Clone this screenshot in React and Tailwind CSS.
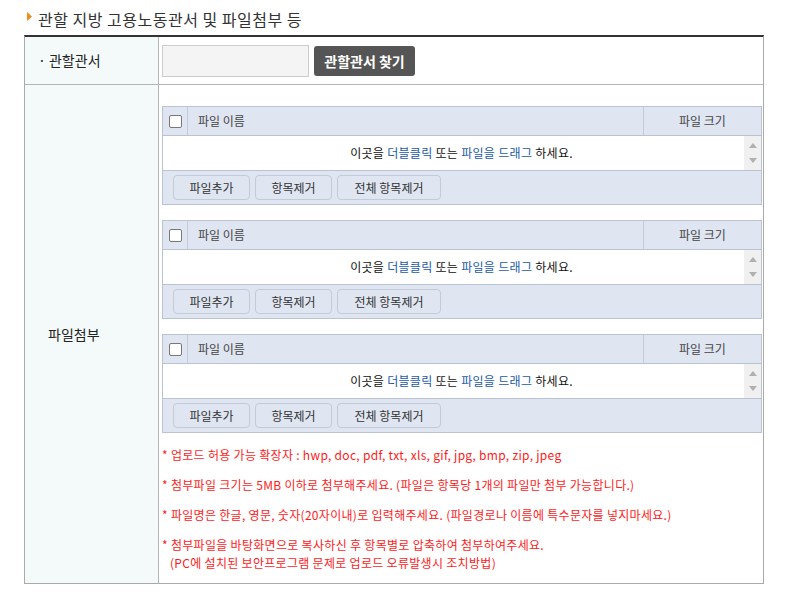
import React from "react";

const font = { fontFamily: '"Noto Sans CJK KR", "Noto Sans", sans-serif' };

function FileBox() {
  return (
    <div className="border border-[#b9c3d3] bg-[#dfe6f1]">
      <div className="flex h-[28px] items-stretch text-[12px] text-[#444]">
        <div className="flex w-[25px] items-center justify-center border-r border-[#c3cbd8]">
          <span className="block h-[13px] w-[13px] rounded-[2px] border border-[#777] bg-white" />
        </div>
        <div className="flex flex-1 items-center pl-[10px]">파일 이름</div>
        <div className="flex w-[118px] items-center justify-center border-l border-[#c3cbd8]">파일 크기</div>
      </div>
      <div className="flex h-[36px] border-y border-[#b9c3d3] bg-white">
        <div className="flex flex-1 items-center justify-center pl-[16px] text-[12px] tracking-[0.3px] text-[#111]">
          <span>
            이곳을 <span className="text-[#1a5aa8]">더블클릭</span> 또는{" "}
            <span className="text-[#1a5aa8]">파일을 드래그</span> 하세요.
          </span>
        </div>
        <div className="flex w-[17px] flex-col items-center justify-between bg-[#f0f0f0] py-[7px]">
          <svg width="8" height="5" viewBox="0 0 8 5"><path d="M0 5L4 0L8 5Z" fill="#b0b0b0" /></svg>
          <svg width="8" height="5" viewBox="0 0 8 5"><path d="M0 0L4 5L8 0Z" fill="#b0b0b0" /></svg>
        </div>
      </div>
      <div className="flex h-[33px] items-center gap-[5px] pl-[10px]">
        <button className="h-[25px] w-[77px] rounded-[4px] border border-[#c3cbd8] bg-[#dfe6f1] text-[12px] text-[#333]">파일추가</button>
        <button className="h-[25px] w-[77px] rounded-[4px] border border-[#c3cbd8] bg-[#dfe6f1] text-[12px] text-[#333]">항목제거</button>
        <button className="h-[25px] w-[104px] rounded-[4px] border border-[#c3cbd8] bg-[#dfe6f1] text-[12px] text-[#333]">전체 항목제거</button>
      </div>
    </div>
  );
}

export default function App() {
  return (
    <div className="min-h-[592px] w-[785px] bg-white pl-[24px] pt-[7px]" style={font}>
      <div className="flex h-[24px] items-center pl-[3px] text-[16px] tracking-[0.5px] text-[#333]">
        <svg width="5" height="9" viewBox="0 0 5 9" className="mb-[5px] mr-[6px]">
          <path d="M0 0L5 4.5L0 9Z" fill="#f08c1e" />
        </svg>
        관할 지방 고용노동관서 및 파일첨부 등
      </div>
      <div className="mt-[4px] w-[740px] border-x border-b border-t-2 border-[#aaa] border-t-[#333]">
        <div className="grid h-[48px] grid-cols-[134px_1fr] border-b border-[#b5b5b5]">
          <div className="flex items-center border-r border-[#b5b5b5] bg-[#f4fafa] pl-[13px] text-[14px] text-[#222]">
            · 관할관서
          </div>
          <div className="flex items-center gap-[5px] pl-[3px] pt-[1px]">
            <div className="h-[32px] w-[147px] border border-[#ccc] bg-[#f4f4f4]" />
            <button className="h-[30px] w-[101px] rounded-[3px] bg-[#555] text-[14px] font-bold text-white">관할관서 찾기</button>
          </div>
        </div>
        <div className="grid grid-cols-[134px_1fr]">
          <div className="flex items-center border-r border-[#b5b5b5] bg-[#f4fafa] pl-[23px] text-[14px] text-[#222]">
            파일첨부
          </div>
          <div className="pb-[11px] pl-[3px] pr-[1px] pt-[21px]">
            <div className="flex flex-col gap-[15px]">
              <FileBox />
              <FileBox />
              <FileBox />
            </div>
            <div className="mt-[13px] flex flex-col gap-[12px] text-[12px] leading-[18px] tracking-[0.3px] text-[#ff1a1a]">
              <p>* 업로드 허용 가능 확장자 : hwp, doc, pdf, txt, xls, gif, jpg, bmp, zip, jpeg</p>
              <p>* 첨부파일 크기는 5MB 이하로 첨부해주세요. (파일은 항목당 1개의 파일만 첨부 가능합니다.)</p>
              <p>* 파일명은 한글, 영문, 숫자(20자이내)로 입력해주세요. (파일경로나 이름에 특수문자를 넣지마세요.)</p>
              <p>
                * 첨부파일을 바탕화면으로 복사하신 후 항목별로 압축하여 첨부하여주세요.
                <br />
                <span className="pl-[8px]">(PC에 설치된 보안프로그램 문제로 업로드 오류발생시 조치방법)</span>
              </p>
            </div>
          </div>
        </div>
      </div>
    </div>
  );
}
